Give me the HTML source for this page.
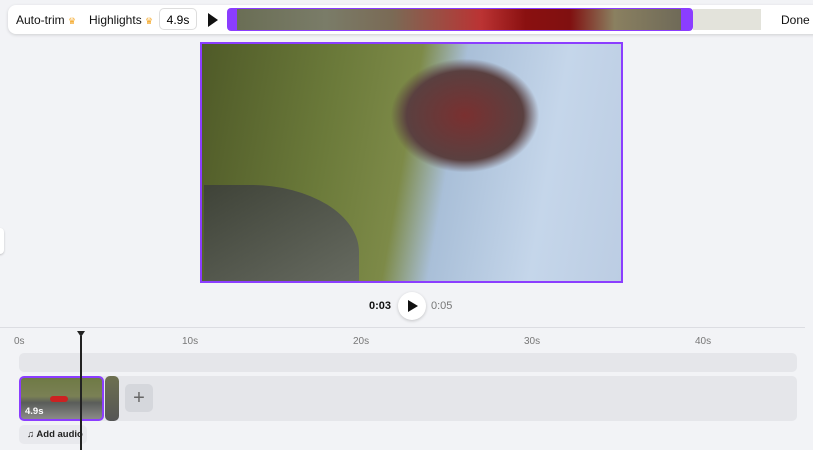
<!DOCTYPE html><html><head><style>
body{margin:0;width:813px;height:450px;background:#f2f3f6;font-family:"Liberation Sans",sans-serif;position:relative;overflow:hidden}
.a{position:absolute}
</style></head><body>
<div class="a" style="left:8px;top:5px;width:820px;height:29px;background:#fff;border-radius:8px;box-shadow:0 1px 3px rgba(0,0,0,.15)"></div>
<div class="a" style="left:16px;top:13px;font-size:12px;color:#111">Auto-trim <span style="color:#f5a623;font-size:9px">♛</span></div>
<div class="a" style="left:89px;top:13px;font-size:12px;color:#111">Highlights <span style="color:#f5a623;font-size:9px">♛</span></div>
<div class="a" style="left:159px;top:8px;width:38px;height:22px;border:1px solid #ddd;border-radius:5px;font-size:12px;text-align:center;line-height:22px;box-sizing:border-box">4.9s</div>
<svg class="a" style="left:207px;top:13px" width="12" height="14"><path d="M1 0L11 7L1 14Z" fill="#111"/></svg>
<div class="a" style="left:227px;top:8px;width:466px;height:23px;border-radius:4px;background:#8b3dff"></div>
<div class="a" style="left:237px;top:9px;width:444px;height:21px;background:linear-gradient(90deg,#6a6e55 0,#7a7c68 20%,#7a6a55 35%,#b33 55%,#8a1010 65%,#801010 75%,#8a8060 85%,#6f6a58 100%)"></div>
<div class="a" style="left:693px;top:9px;width:68px;height:21px;background:#dcdcd2;opacity:.8"></div>
<div class="a" style="left:781px;top:13px;font-size:12px;color:#111">Done</div>
<div class="a" style="left:200px;top:42px;width:419px;height:237px;border:2px solid #8b3dff;background:linear-gradient(100deg,#4f5a28 0%,#6b7a3a 30%,#7d8a48 48%,#a9bfd8 58%,#c5d6ea 80%,#bccde3 100%)"></div>
<div class="a" style="left:204px;top:185px;width:155px;height:96px;background:linear-gradient(150deg,#3f4338,#666a60);border-radius:0 70% 0 0"></div>
<div class="a" style="left:390px;top:58px;width:150px;height:115px;background:radial-gradient(#7a3030,#5a4040 55%,transparent 70%)"></div>
<div class="a" style="left:369px;top:300px;font-size:11px;font-weight:bold;color:#111">0:03</div>
<div class="a" style="left:398px;top:292px;width:28px;height:28px;border-radius:50%;background:#fff;box-shadow:0 1px 3px rgba(0,0,0,.2)"></div>
<svg class="a" style="left:408px;top:300px" width="10" height="12"><path d="M0 0L10 6L0 12Z" fill="#111"/></svg>
<div class="a" style="left:431px;top:300px;font-size:11px;color:#777">0:05</div>
<div class="a" style="left:0;top:327px;width:805px;height:1px;background:#dcdde2"></div>
<div class="a" style="left:14px;top:336px;font-size:10px;color:#777">0s</div>
<div class="a" style="left:182px;top:336px;font-size:10px;color:#777">10s</div>
<div class="a" style="left:353px;top:336px;font-size:10px;color:#777">20s</div>
<div class="a" style="left:524px;top:336px;font-size:10px;color:#777">30s</div>
<div class="a" style="left:695px;top:336px;font-size:10px;color:#777">40s</div>
<div class="a" style="left:19px;top:353px;width:778px;height:19px;background:#e5e6ea;border-radius:5px"></div>
<div class="a" style="left:19px;top:376px;width:778px;height:45px;background:#e5e6ea;border-radius:5px"></div>
<div class="a" style="left:19px;top:376px;width:85px;height:45px;border:2px solid #8b3dff;border-radius:5px;box-sizing:border-box;background:linear-gradient(180deg,#6f7a45 0,#7a8055 45%,#5a5d5a 60%,#8a8a88 100%)"></div>
<div class="a" style="left:50px;top:396px;width:18px;height:6px;background:#c22;border-radius:3px"></div>
<div class="a" style="left:25px;top:406px;font-size:9.5px;font-weight:bold;color:#fff">4.9s</div>
<div class="a" style="left:105px;top:376px;width:14px;height:45px;border-radius:5px;background:linear-gradient(#6d7050,#555)"></div>
<div class="a" style="left:125px;top:384px;width:28px;height:28px;border-radius:5px;background:#d5d7dc;text-align:center;line-height:28px;font-size:20px;color:#666">+</div>
<div class="a" style="left:19px;top:425px;width:68px;height:19px;background:#e8e9ed;border-radius:5px;font-size:9.5px;font-weight:bold;line-height:19px;color:#222;padding-left:8px;box-sizing:border-box">♫ Add audio</div>
<div class="a" style="left:80px;top:336px;width:2px;height:114px;background:#222"></div>
<svg class="a" style="left:77px;top:331px" width="8" height="6"><path d="M0 0H8L4 6Z" fill="#222"/></svg>
<div class="a" style="left:-6px;top:228px;width:10px;height:26px;background:#fff;border-radius:4px;box-shadow:0 1px 2px rgba(0,0,0,.2)"></div>
</body></html>
